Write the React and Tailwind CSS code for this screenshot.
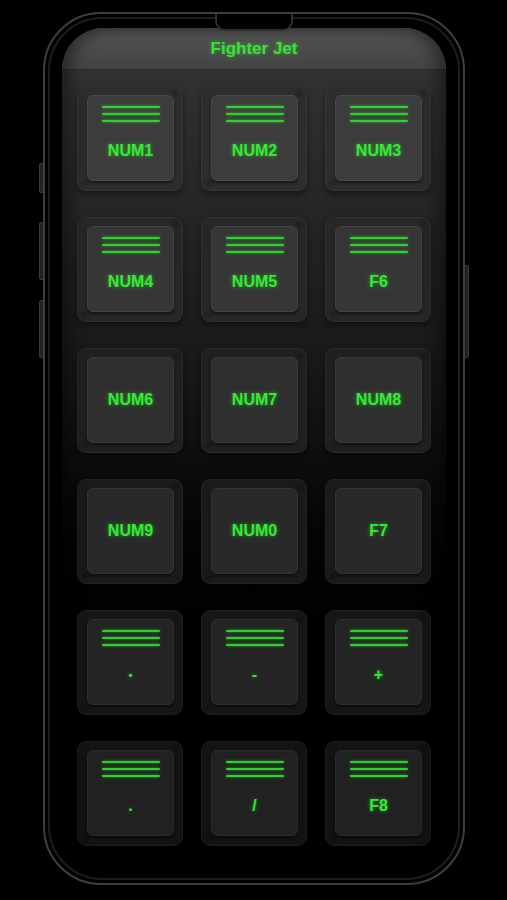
import React from "react";

const rows = [
  { keys: ["NUM1", "NUM2", "NUM3"], lines: true },
  { keys: ["NUM4", "NUM5", "F6"], lines: true },
  { keys: ["NUM6", "NUM7", "NUM8"], lines: false },
  { keys: ["NUM9", "NUM0", "F7"], lines: false },
  { keys: ["•", "-", "+"], lines: true },
  { keys: [".", "/", "F8"], lines: true },
];

const outerCls = [
  "bg-[#2d2d2d] border-[#363636]",
  "bg-[#272727] border-[#303030]",
  "bg-[#202020] border-[#292929]",
  "bg-[#1a1a1a] border-[#232323]",
  "bg-[#161616] border-[#1f1f1f]",
  "bg-[#131313] border-[#1c1c1c]",
];

const capCls = [
  "bg-[#3c3c3c] border-[#494949]",
  "bg-[#363636] border-[#424242]",
  "bg-[#2f2f2f] border-[#3a3a3a]",
  "bg-[#292929] border-[#333333]",
  "bg-[#242424] border-[#2e2e2e]",
  "bg-[#212121] border-[#2b2b2b]",
];

function Lines() {
  return (
    <div className="flex flex-col gap-[5px] w-[58px] mx-auto pt-[10px]">
      <div className="h-[2px] rounded-full bg-[#2fd02f] shadow-[0_0_3px_rgba(40,255,40,0.6)]" />
      <div className="h-[2px] rounded-full bg-[#2fd02f] shadow-[0_0_3px_rgba(40,255,40,0.6)]" />
      <div className="h-[2px] rounded-full bg-[#2fd02f] shadow-[0_0_3px_rgba(40,255,40,0.6)]" />
    </div>
  );
}

function Key({ label, lines, row }) {
  const small = label === "•";
  return (
    <div
      className={`relative w-[106px] h-[105px] rounded-[9px] border pt-[8px] pl-[9px] pr-[8px] pb-[9px] shadow-[0_3px_6px_rgba(0,0,0,0.45)] ${outerCls[row]}`}
    >
      <div className="absolute top-[3px] right-[3px] w-[7px] h-[7px] rounded-full bg-black/15 blur-[1px]" />
      <div className="absolute bottom-[3px] left-[3px] w-[7px] h-[7px] rounded-full bg-black/15 blur-[1px]" />
      <div
        className={`relative w-[87px] h-[86px] rounded-[6px] border flex flex-col shadow-[0_2px_3px_rgba(0,0,0,0.5)] ${capCls[row]}`}
      >
        {lines && <Lines />}
        <div className="flex-1 flex items-center justify-center">
          <span
            className={`${small ? "text-[11px]" : "text-[16px]"} leading-none font-bold text-[#38e838] [text-shadow:0_0_4px_rgba(40,255,40,0.55)] [font-family:'Liberation_Sans',Arial,sans-serif]`}
          >
            {label}
          </span>
        </div>
      </div>
    </div>
  );
}

export default function App() {
  return (
    <div className="relative w-[507px] h-[900px] bg-black overflow-hidden [font-family:'Liberation_Sans',Arial,sans-serif]">
      {/* side buttons */}
      <div className="absolute left-[39px] top-[163px] w-[5px] h-[30px] rounded-l-[2px] bg-[#222] border border-[#3a3a3a]" />
      <div className="absolute left-[39px] top-[222px] w-[5px] h-[58px] rounded-l-[2px] bg-[#222] border border-[#3a3a3a]" />
      <div className="absolute left-[39px] top-[300px] w-[5px] h-[58px] rounded-l-[2px] bg-[#222] border border-[#3a3a3a]" />
      <div className="absolute left-[464px] top-[265px] w-[5px] h-[93px] rounded-r-[2px] bg-[#222] border border-[#3a3a3a]" />

      <div className="pt-[12px] pl-[43px]">
        <div className="relative w-[422px] h-[873px] rounded-[58px] border-2 border-[#3e3e3e] bg-black p-[3px]">
          <div className="h-full rounded-[54px] border-2 border-[#1e1e1e] pt-[9px] px-[12px] pb-[9px]">
            <div className="relative h-full rounded-[42px] overflow-hidden flex flex-col bg-linear-to-b from-[#363636] via-[#171717] via-[42%] to-black to-[85%]">
              <div className="h-[42px] shrink-0 flex items-center justify-center bg-linear-to-b from-[#545454] to-[#434343] border-b border-[#2c2c2c]">
                <span className="text-[17px] leading-none font-bold text-[#3ce03c] [text-shadow:0_0_5px_rgba(40,255,40,0.5)]">
                  Fighter Jet
                </span>
              </div>
              <div className="pt-[16px]">
                <div className="grid grid-cols-3 w-[354px] mx-auto gap-x-[18px] gap-y-[26px]">
                  {rows.map((r, ri) =>
                    r.keys.map((k) => (
                      <Key key={`${ri}-${k}`} label={k} lines={r.lines} row={ri} />
                    ))
                  )}
                </div>
              </div>
              <div className="pointer-events-none absolute inset-0 rounded-[42px] shadow-[inset_10px_0_14px_rgba(0,0,0,0.35),inset_-10px_0_14px_rgba(0,0,0,0.35)]" />
            </div>
          </div>
          {/* notch */}
          <div className="absolute top-0 left-1/2 -translate-x-1/2 w-[78px] h-[17px] rounded-b-[10px] bg-black border-x-2 border-b-2 border-[#2e2e2e]" />
        </div>
      </div>
    </div>
  );
}
